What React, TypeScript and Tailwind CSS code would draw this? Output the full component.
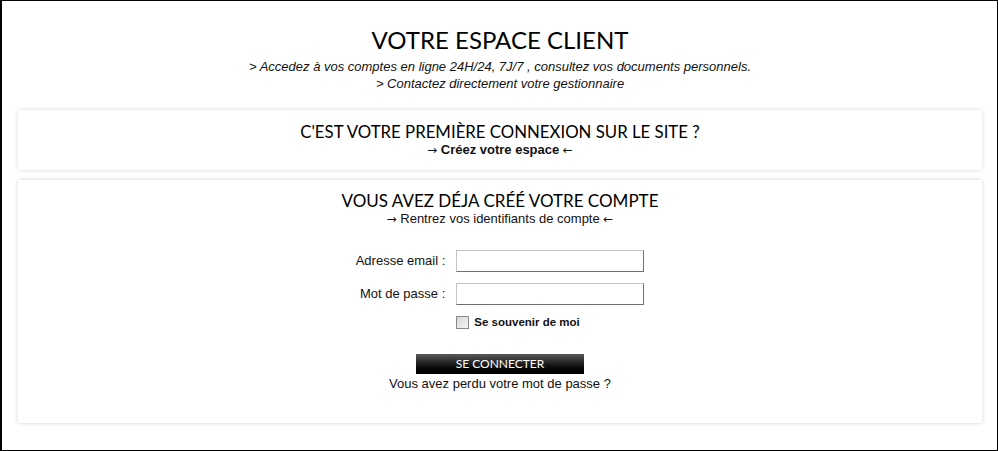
import React from "react";

const Arrow = ({ c }: { c: string }) => (
  <span className="font-normal leading-[0]" style={{ fontFamily: "'DejaVu Sans', sans-serif", fontSize: "12px" }}>
    {c}
  </span>
);

export default function App() {
  return (
    <div
      className="box-border w-[998px] h-[451px] border border-l-2 border-black bg-white text-[#111] overflow-hidden"
      style={{ fontFamily: "'Liberation Sans', Arial, sans-serif" }}
    >
      <div className="pl-[16px] pr-[15px] pt-[25px]">
        <div className="text-center">
          <h1 className="text-[24px] leading-[28px] text-black font-[Lato]">VOTRE ESPACE CLIENT</h1>
          <p className="mt-[4px] text-[13px] leading-[17px] italic">
            &gt; Accedez à vos comptes en ligne 24H/24, 7J/7 , consultez vos documents personnels.
          </p>
          <p className="text-[13px] leading-[17px] italic">&gt; Contactez directement votre gestionnaire</p>
        </div>

        <div className="mt-[18px] h-[60px] bg-white shadow-[0_0_4px_rgba(0,0,0,0.18)] pt-[12px] text-center">
          <h2 className="text-[16.8px] leading-[20px] text-black font-[Lato]">
            C'EST VOTRE PREMIÈRE CONNEXION SUR LE SITE ?
          </h2>
          <p className="h-[16px] text-[13px] leading-[16px] font-bold">
            <Arrow c="→" /> Créez votre espace <Arrow c="←" />
          </p>
        </div>

        <div className="mt-[10px] h-[243px] bg-white shadow-[0_0_4px_rgba(0,0,0,0.18)] pt-[11px] text-center">
          <h2 className="text-[17px] leading-[20px] text-black font-[Lato]">VOUS AVEZ DÉJA CRÉÉ VOTRE COMPTE</h2>
          <p className="h-[16px] text-[13px] leading-[16px]">
            <Arrow c="→" /> Rentrez vos identifiants de compte <Arrow c="←" />
          </p>

          <div className="mt-[23px] mx-auto w-fit grid grid-cols-[auto_188px] gap-x-[11px] gap-y-[11px] items-center text-[13px]">
            <label className="justify-self-end leading-[22px]">Adresse email :</label>
            <input
              type="text"
              className="box-border h-[22px] w-[188px] border border-t-[#c4c4c4] border-l-[#c4c4c4] border-b-[#707070] border-r-[#707070] bg-white"
            />
            <label className="justify-self-end leading-[22px]">Mot de passe :</label>
            <input
              type="password"
              className="box-border h-[22px] w-[188px] border border-t-[#c4c4c4] border-l-[#c4c4c4] border-b-[#707070] border-r-[#707070] bg-white"
            />
            <div />
            <div className="flex items-center gap-[5px] h-[13px] text-left">
              <span className="box-border inline-block w-[13px] h-[13px] border border-[#8a8a8a] bg-gradient-to-br from-[#d8d8d8] to-[#f4f4f4]" />
              <span className="text-[11.5px] font-bold leading-[13px]">Se souvenir de moi</span>
            </div>
          </div>

          <button className="mt-[25px] mx-auto block w-[168px] h-[20px] bg-gradient-to-b from-[#5a5a5a] to-[#000] text-white text-[12px] leading-[20px] font-[Lato]">
            SE CONNECTER
          </button>
          <p className="text-[13px] leading-[17px] mt-[1px]">Vous avez perdu votre mot de passe ?</p>
        </div>
      </div>
    </div>
  );
}
